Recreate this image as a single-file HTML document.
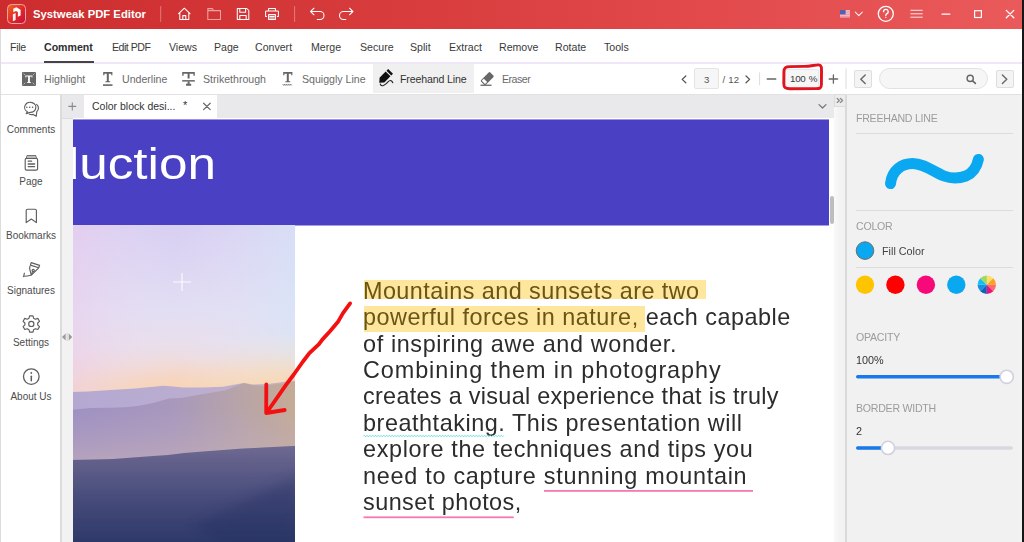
<!DOCTYPE html>
<html><head><meta charset="utf-8">
<style>
*{margin:0;padding:0;box-sizing:border-box}
html,body{width:1024px;height:542px;overflow:hidden;background:#fff;font-family:"Liberation Sans",sans-serif}
.a{position:absolute}
svg{position:absolute;overflow:visible}
#title{left:0;top:0;width:1022px;height:29px;background:linear-gradient(90deg,#cc2c2d 0%,#d83c3d 40%,#e24a4c 70%,#ea5a5b 100%)}
#rborder{left:1022px;top:0;width:2px;height:542px;background:#161616}
#lborder{left:0;top:29px;width:1px;height:513px;background:#dcdcdc}
.ttl{color:#fff;font-weight:bold;font-size:11.3px;left:33px;top:7.5px;white-space:nowrap}
#menu{left:1px;top:29px;width:1021px;height:35px;background:#fff;border-bottom:2px solid #efe7f7}
.mi{position:absolute;top:41px;font-size:10.6px;color:#3a3a3a;white-space:nowrap}
#tool{left:1px;top:64px;width:1021px;height:31px;background:#fff;border-bottom:1px solid #e2e2e2}
.ti{position:absolute;top:73px;font-size:10.6px;color:#6a6a6a;white-space:nowrap}
#sidebar{left:1px;top:95px;width:60px;height:447px;background:#fff;border-right:1px solid #dedede}
.si{position:absolute;font-size:10px;color:#4c4c4c;white-space:nowrap;text-align:center;width:60px;left:1px}
#split{left:61px;top:95px;width:12px;height:447px;background:#f2f2f2}
#tabbar{left:61px;top:95px;width:773px;height:23px;background:#e9e9eb}
#doc{left:73px;top:119px;width:761px;height:423px;background:#fff;overflow:hidden}
#rcol{left:834px;top:95px;width:11px;height:447px;background:linear-gradient(90deg,#f9f9f9,#f3f3f3 50%,#f2f2f2)}
#rline{left:845px;top:95px;width:2px;height:447px;background:#dadada}
#panel{left:847px;top:95px;width:175px;height:447px;background:#f1f1f1}
.pl{position:absolute;left:856px;font-size:10.6px;color:#9c9c9c;white-space:nowrap;letter-spacing:-0.25px}
.pv{position:absolute;left:856px;font-size:10.8px;color:#333;white-space:nowrap}
.para{position:absolute;left:363px;font-size:23.4px;letter-spacing:0.35px;color:#2c2c2c;will-change:transform;white-space:nowrap;line-height:26.4px}
</style></head><body>
<div id="title" class="a"></div>
<div id="rborder" class="a"></div>
<div id="menu" class="a"></div>
<div id="tool" class="a"></div>
<div id="lborder" class="a"></div>
<div id="sidebar" class="a"></div>
<div id="split" class="a"></div>
<div id="tabbar" class="a"></div>
<div id="rcol" class="a"></div>
<div id="rline" class="a"></div>
<div id="panel" class="a"></div>


<!-- logo -->
<svg style="left:0;top:0" width="1024" height="30">
<defs><linearGradient id="lg" x1="0" y1="0" x2="1" y2="1"><stop offset="0" stop-color="#f26a1a"/><stop offset="0.5" stop-color="#e22a28"/><stop offset="1" stop-color="#c80c3c"/></linearGradient></defs>
<rect x="7.5" y="4.5" width="18" height="19" rx="4" fill="url(#lg)" stroke="#f3a3a3" stroke-width="1"/>
<path d="M13.2 8.8 L16.4 7.3 L20.6 9.7 V15.4 L17.9 16.8 V12 L16 11 L13.4 12.2 Z" fill="#fff"/>
<path d="M12.8 14.3 L15.6 13 V19.9 L12.9 21.2 Z" fill="#fff" opacity="0.95"/>
<g stroke="#fff" fill="none" stroke-width="1.05" stroke-linejoin="round" stroke-linecap="round">
<line x1="160.7" y1="6.5" x2="160.7" y2="21.5" stroke="rgba(255,255,255,0.35)" stroke-width="1"/>
<line x1="294.6" y1="6.5" x2="294.6" y2="21.5" stroke="rgba(255,255,255,0.35)" stroke-width="1"/>
<!-- home -->
<path d="M178.6 13.6 L184.3 8.2 L190 13.6 M179.8 12.5 V19.4 H188.8 V12.5 M182.8 19.4 V15.6 H185.8 V19.4"/>
<!-- folder -->
<path d="M207.8 8.6 H212.4 L213.6 10.6 H220.5 V19.4 H207.8 Z M207.8 10.6 H213.6" opacity="0.55"/>
<!-- save -->
<path d="M237.3 8.5 H246.8 L248.8 10.5 V19.4 H237.3 Z M239.8 8.5 V12.2 H245.6 V8.5 M239.8 19.4 V15.4 H246.2 V19.4"/>
<!-- print -->
<path d="M268.6 11 V8.5 H275.4 V11 M266.6 16.4 H265.6 V11.6 Q265.6 11 266.4 11 H277.6 Q278.4 11 278.4 11.6 V16.4 H277.4 M268.6 14.6 H275.4 V19.4 H268.6 Z M269.8 16.5 H274.2 M269.8 18 H274.2" />
<!-- undo -->
<path d="M314 8.2 L310.6 11.5 L314 14.8 M310.8 11.5 H320 A4 4 0 0 1 320 19.5 H317.3"/>
<!-- redo -->
<path d="M349.5 8.2 L352.9 11.5 L349.5 14.8 M352.7 11.5 H343.5 A4 4 0 0 0 343.5 19.5 H345.8"/>
<!-- chevron -->
<path d="M855.2 12 L858.8 15.6 L862.4 12"/>
<!-- help -->
<circle cx="885.8" cy="13.8" r="7.5" stroke-width="1.3"/>
<path d="M883.5 11.7 A2.35 2.35 0 1 1 886.5 13.9 Q885.8 14.4 885.8 15.5" stroke-width="1.3"/>
<circle cx="885.8" cy="17.4" r="0.6" fill="#fff" stroke="none"/>
<!-- hamburger -->
<path d="M910.8 10.3 H922.3 M910.8 13.8 H922.3 M910.8 17.2 H922.3" stroke-width="1" opacity="0.85"/>
<!-- min -->
<path d="M942 14.1 H949.8" stroke-width="1.4"/>
<!-- max -->
<rect x="974.6" y="10.7" width="6.8" height="6.8" stroke-width="1.2" stroke-linejoin="miter"/>
<!-- close -->
<path d="M1006.3 10.4 L1013.8 17.8 M1013.8 10.4 L1006.3 17.8" stroke-width="1.3"/>
</g>
<!-- flag -->
<rect x="840" y="10" width="10" height="7.6" fill="#f3b6c0"/>
<rect x="840" y="11.5" width="10" height="1" fill="#ec8a9a" opacity="0.6"/>
<rect x="840" y="14" width="10" height="1" fill="#ec8a9a" opacity="0.6"/>
<rect x="840" y="16.5" width="10" height="1.1" fill="#e58090"/>
<rect x="840" y="10" width="5.6" height="4.4" fill="#5161b4"/>
</svg>

<!-- title text -->
<div class="a ttl">Systweak PDF Editor</div>

<!-- menu -->
<div class="mi" style="left:10px;letter-spacing:-0.3px">File</div>
<div class="mi" style="left:44px;font-weight:bold;color:#2e2e2e">Comment</div>
<div class="a" style="left:44px;top:61px;width:50px;height:2px;background:#444"></div>
<div class="mi" style="left:112px;letter-spacing:-0.5px">Edit PDF</div>
<div class="mi" style="left:169px">Views</div>
<div class="mi" style="left:214px">Page</div>
<div class="mi" style="left:255px">Convert</div>
<div class="mi" style="left:311px">Merge</div>
<div class="mi" style="left:360px">Secure</div>
<div class="mi" style="left:410px">Split</div>
<div class="mi" style="left:449px">Extract</div>
<div class="mi" style="left:499px">Remove</div>
<div class="mi" style="left:555px">Rotate</div>
<div class="mi" style="left:604px">Tools</div>

<!-- toolbar -->
<div class="a" style="left:373px;top:64px;width:101px;height:29px;background:#f0f0f0"></div>
<div class="ti" style="left:44px">Highlight</div>
<div class="ti" style="left:122px">Underline</div>
<div class="ti" style="left:203px">Strikethrough</div>
<div class="ti" style="left:302px">Squiggly Line</div>
<div class="ti" style="left:400px;color:#333;letter-spacing:-0.15px">Freehand Line</div>
<div class="ti" style="left:502px;letter-spacing:-0.5px">Eraser</div>


<svg style="left:0;top:0" width="1024" height="96">
<!-- highlight -->
<rect x="22" y="72" width="14" height="14" rx="1" fill="#686868"/>
<path d="M25.4 75.4 H32.4 V77.4 H31.6 V76.6 H29.9 V82 H30.8 V83 H27.2 V82 H28.1 V76.6 H26.2 V77.4 H25.4 Z" fill="#fff"/>
<g stroke="#c8c8c8" stroke-width="0.8" stroke-linecap="round"><path d="M23.8 73.8 L25 75 M34.2 73.8 L33 75 M23.8 84.2 L25 83 M34.2 84.2 L33 83"/></g>
<g fill="#666">
<!-- underline -->
<path d="M103.2 72 H112.4 V75.2 H111.2 V73.8 H108.8 V81.2 H110.2 V82.2 H105.4 V81.2 H106.8 V73.8 H104.4 V75.2 H103.2 Z"/>
<rect x="103" y="84.3" width="9.5" height="1.6"/>
<!-- strike -->
<path d="M182.2 72 H194.8 V75.8 H193.4 V73.8 H189.6 V78.6 H187.6 V73.8 H183.6 V75.8 H182.2 Z"/>
<rect x="182.2" y="80.1" width="12.6" height="1.5"/>
<path d="M187.6 81.6 H189.6 V83.8 H191.2 V85.7 H186 V83.8 H187.6 Z"/>
<!-- squiggly -->
<path d="M283.2 72 H292.4 V75.2 H291.2 V73.8 H288.8 V81.2 H290.2 V82.2 H285.4 V81.2 H286.8 V73.8 H284.4 V75.2 H283.2 Z"/>
</g>
<path d="M282.8 84.2 l1 1.2 l1 -1.2 l1 1.2 l1 -1.2 l1 1.2 l1 -1.2 l1 1.2 l1 -1.2 l1 1.2" stroke="#666" stroke-width="0.9" fill="none"/>
<!-- freehand pen -->
<g transform="translate(384.5 77.5) rotate(45)">
<path d="M-3.4 -5 H3.4 V3.6 L0 7.4 L-3.4 3.6 Z" fill="#111"/>
<rect x="-3.4" y="-8.6" width="6.8" height="2.4" fill="#111"/>
</g>
<path d="M380.3 84 Q381 86.4 383.5 85.4 Q386.2 84 388 81.8 Q390 79.6 391.6 81 Q392.4 81.8 392.8 82.8" stroke="#222" stroke-width="1.1" fill="none" stroke-linecap="round"/>
<!-- eraser -->
<g transform="translate(487.6 78.2) rotate(-45)">
<rect x="-7" y="-3.3" width="13" height="6.6" rx="1.2" fill="#686868"/>
<rect x="-6" y="-2.3" width="3" height="4.6" fill="#fff"/>
</g>
<rect x="480.5" y="84.6" width="11" height="1.3" fill="#686868"/>
</svg>


<!-- nav controls -->
<div class="a" style="left:694px;top:68px;width:25px;height:21px;background:#f6f6f6;border:1px solid #e4e4e4;border-radius:2px"></div>
<div class="a" style="left:704px;top:73.7px;font-size:9.6px;color:#555">3</div>
<div class="a" style="left:722.5px;top:74px;font-size:9.6px;color:#555;white-space:nowrap;word-spacing:0.5px">/ 12</div>
<div class="a" style="left:785px;top:68.5px;width:34px;height:20px;background:#f6f6f6;border:1px solid #e8e8e8;border-radius:2px"></div>
<div class="a" style="left:790px;top:72.6px;font-size:9.8px;color:#3a3a3a;white-space:nowrap;letter-spacing:-0.3px;word-spacing:1px">100 %</div>
<div class="a" style="left:853.5px;top:70px;width:18.5px;height:18px;background:#f4f4f4;border:1px solid #dedede;border-radius:2px"></div>
<div class="a" style="left:995.5px;top:70px;width:18.5px;height:18px;background:#f4f4f4;border:1px solid #dedede;border-radius:2px"></div>
<div class="a" style="left:879px;top:68px;width:109px;height:21px;background:#f6f6f6;border:1px solid #e2e2e2;border-radius:11px"></div>
<svg style="left:0;top:0" width="1024" height="96">
<g stroke="#555" fill="none" stroke-width="1.3" stroke-linecap="round" stroke-linejoin="round">
<path d="M685.8 76 L682.2 79.4 L685.8 82.8"/>
<path d="M746 76 L749.6 79.4 L746 82.8"/>
<path d="M767.2 79 H775.8" stroke="#666"/>
<path d="M829.2 79 H837.6 M833.4 74.8 V83.2" stroke="#666"/>
<path d="M865.2 75 L860.8 79.2 L865.2 83.4" stroke="#666" stroke-width="1.4"/>
<path d="M1002.4 75 L1006.8 79.2 L1002.4 83.4" stroke="#666" stroke-width="1.4"/>
<circle cx="970.2" cy="78.4" r="3.1" stroke="#666" stroke-width="1.4"/>
<path d="M972.6 80.8 L975.4 83.4" stroke="#666" stroke-width="1.6"/>
</g>
<line x1="759.6" y1="72.4" x2="759.6" y2="85.2" stroke="#dcdcdc" stroke-width="1"/>
<line x1="846" y1="68.5" x2="846" y2="89" stroke="#dcdcdc" stroke-width="1"/>
<path d="M783.9 72 C783.9 67.4 786 66.7 790 66.6 L804 66.4 C811 66.2 815 64.8 818.6 64.9 C821.8 65.1 821.6 68 821.5 72 L821.4 84.6 C821.4 88.2 820 88.6 816 88.6 L790 88.7 C785.4 88.7 783.8 87.8 783.8 83.4 Z" stroke="#e0141e" stroke-width="2.9" fill="none" stroke-linejoin="round"/>
</svg>


<!-- sidebar -->
<svg style="left:0;top:0" width="100" height="542">
<g stroke="#5e5e5e" fill="none" stroke-width="1.15" stroke-linecap="round" stroke-linejoin="round">
<!-- comments -->
<path d="M35.6 108.8 A5.6 5.1 0 1 0 27.4 111.8 L26.2 113.6 L30.2 112.4 A5.6 5.1 0 0 0 35.6 108.8"/>
<path d="M36.6 104.4 A5.2 4.8 0 0 1 36.8 111.6 L36.2 116.3 L33.2 114.4 A5.4 4.8 0 0 1 29.4 114.2"/>
<!-- page -->
<rect x="25.2" y="158.3" width="12.4" height="11.8" rx="1.4"/>
<path d="M26.4 158.3 L27.2 155.6 H35.6 L36.4 158.3"/>
<path d="M28.2 161.2 H31.6 M28.2 164 H34.6 M28.2 166.6 H34.6" stroke-width="1.3"/>
<!-- bookmark -->
<path d="M26.2 222.6 V210.6 Q26.2 209.2 27.6 209.2 H35 Q36.4 209.2 36.4 210.6 V222.6 L31.3 219 Z"/>
<!-- signature -->
<path d="M31.2 262.6 L39.6 265.4 L38.7 267.8 L30.4 265.1 Z"/>
<path d="M30 266.2 L29.6 268.6 L31.3 275 L38.3 268.4"/>
<circle cx="33.2" cy="270.4" r="1.1"/>
<path d="M32.6 271.4 L31.6 274.4"/>
<path d="M31.3 275 Q27.5 276.2 23.8 276.2 M24.4 273.2 L23.6 276.6"/>
<!-- gear -->
<path d="M29.6 315.8 H33 L33.6 318.2 L35.4 319.2 L37.8 318.4 L39.5 321.3 L37.7 323 V324.9 L39.5 326.6 L37.8 329.5 L35.4 328.7 L33.6 329.7 L33 332.1 H29.6 L29 329.7 L27.2 328.7 L24.8 329.5 L23.1 326.6 L24.9 324.9 V323 L23.1 321.3 L24.8 318.4 L27.2 319.2 L29 318.2 Z"/>
<circle cx="31.3" cy="323.9" r="2.6"/>
<!-- info -->
<circle cx="31.3" cy="376.6" r="7.8" stroke-width="1.3"/>
<path d="M31.3 376.2 V380.8" stroke-width="1.5"/>
</g>
<g fill="#5e5e5e">
<circle cx="26.8" cy="107.2" r="0.8"/><circle cx="29.7" cy="107.2" r="0.8"/><circle cx="32.6" cy="107.2" r="0.8"/>
<path d="M27.4 155.8 H35.4 L36 158 H26.8 Z" fill="#bbb"/>
<circle cx="31.3" cy="373" r="0.9"/>
</g>
</svg>
<div class="si" style="top:124px">Comments</div>
<div class="si" style="top:176px">Page</div>
<div class="si" style="top:230px">Bookmarks</div>
<div class="si" style="top:285px">Signatures</div>
<div class="si" style="top:337px">Settings</div>
<div class="si" style="top:391px">About Us</div>


<!-- tabbar content -->
<div class="a" style="left:84px;top:95px;width:133px;height:24px;background:#fff"></div>
<div class="a" style="left:92px;top:100px;font-size:10.5px;color:#333;white-space:nowrap">Color block desi...</div>
<div class="a" style="left:183px;top:99px;font-size:11px;color:#333">*</div>
<div class="a" style="left:61px;top:118px;width:12px;height:1px;background:#dcdcdc"></div>
<div class="a" style="left:834px;top:94px;width:12px;height:13px;background:#ececec;border:1px solid #dcdcdc"></div>
<svg style="left:0;top:0" width="1024" height="542">
<g stroke="#777" stroke-width="1.1" fill="none" stroke-linecap="round" stroke-linejoin="round">
<path d="M68.8 106.4 H75.8 M72.3 102.9 V109.9" stroke="#8a8a8a"/>
<path d="M203.6 103.2 L210.2 109.6 M210.2 103.2 L203.6 109.6" stroke="#666" stroke-width="1.2"/>
<path d="M819 104.6 L822.5 108 L826 104.6" stroke="#777" stroke-width="1.3"/>
<path d="M837.2 98.4 L839.4 100.4 L837.2 102.4 M840.4 98.4 L842.6 100.4 L840.4 102.4" stroke="#8a8a8a" stroke-width="1.3"/>
</g>
<path d="M62 337 L65.6 333.6 V340.4 Z M72.2 337 L68.8 333.6 V340.4 Z" fill="#999"/>
<rect x="66.4" y="333" width="1.8" height="8" fill="#dcdcdc"/>
<rect x="60" y="95" width="2" height="447" fill="#dcdcdc"/>
</svg>

<!-- doc -->
<div id="doc" class="a">
<div class="a" style="left:0;top:0;width:756px;height:1px;background:rgba(74,64,195,0.55)"></div><div class="a" style="left:0;top:1px;width:756px;height:105px;background:#4a40c3"></div><div class="a" style="left:0;top:106px;width:756px;height:1px;background:rgba(74,64,195,0.5)"></div>
<div class="a" id="intro" style="left:-124.7px;top:15px;font-size:45px;color:#fff;white-space:nowrap;line-height:60px;transform-origin:0 0;transform:scaleX(1.14)">Introduction</div>
</div>
<div class="a" style="left:830px;top:196px;width:4px;height:28px;background:#bdbdbd;border-radius:2px"></div>
<svg style="left:73px;top:225px;overflow:hidden" width="222" height="317">
<defs>
<linearGradient id="sky" gradientUnits="userSpaceOnUse" x1="0" y1="0" x2="0" y2="170">
<stop offset="0" stop-color="#d8cff2"/>
<stop offset="0.25" stop-color="#ddd6f3"/>
<stop offset="0.5" stop-color="#e2def3"/>
<stop offset="0.7" stop-color="#e9dfeb"/>
<stop offset="0.85" stop-color="#f2dad6"/>
<stop offset="1" stop-color="#f6d4bc"/>
</linearGradient>
<linearGradient id="skyh" x1="0" y1="0" x2="1" y2="0">
<stop offset="0" stop-color="#eccdec" stop-opacity="0.55"/>
<stop offset="0.45" stop-color="#e8e0f4" stop-opacity="0"/>
<stop offset="1" stop-color="#d6e6f8" stop-opacity="0.65"/>
</linearGradient>
<radialGradient id="skyo" gradientUnits="userSpaceOnUse" cx="170" cy="168" r="120" gradientTransform="translate(170 166) scale(1.8 0.3) translate(-170 -166)">
<stop offset="0" stop-color="#fbd0a0" stop-opacity="0.85"/>
<stop offset="0.55" stop-color="#f8d4b8" stop-opacity="0.5"/>
<stop offset="1" stop-color="#f4d8d0" stop-opacity="0"/>
</radialGradient>
<radialGradient id="skyo2" gradientUnits="userSpaceOnUse" cx="222" cy="166" r="100" gradientTransform="translate(222 166) scale(1.2 0.6) translate(-222 -166)">
<stop offset="0" stop-color="#fcd8a8" stop-opacity="0.7"/>
<stop offset="0.5" stop-color="#f6e0c4" stop-opacity="0.45"/>
<stop offset="1" stop-color="#f0e4dc" stop-opacity="0"/>
</radialGradient>
<linearGradient id="r1" x1="0" y1="0" x2="1" y2="0">
<stop offset="0" stop-color="#b4a8d2"/>
<stop offset="0.6" stop-color="#bcaed0"/>
<stop offset="1" stop-color="#c6b2c0"/>
</linearGradient>
<linearGradient id="r2" x1="0" y1="0" x2="1" y2="0">
<stop offset="0" stop-color="#9e90c2"/>
<stop offset="0.45" stop-color="#a898bc"/>
<stop offset="0.75" stop-color="#b8a4a8"/>
<stop offset="1" stop-color="#c6ac94"/>
</linearGradient>
<linearGradient id="r2v" x1="0" y1="0" x2="0" y2="1">
<stop offset="0" stop-color="#b8a8c8" stop-opacity="0"/>
<stop offset="0.3" stop-color="#b8a8c8" stop-opacity="0"/>
<stop offset="1" stop-color="#c8b0b4" stop-opacity="0.7"/>
</linearGradient>
<linearGradient id="r3" x1="0" y1="0" x2="0" y2="1">
<stop offset="0" stop-color="#6e6a92"/>
<stop offset="0.22" stop-color="#5e5c88"/>
<stop offset="0.55" stop-color="#464b7a"/>
<stop offset="1" stop-color="#2c3868"/>
</linearGradient>
<filter id="bl" x="-10%" y="-10%" width="120%" height="120%"><feGaussianBlur stdDeviation="0.7"/></filter>
<filter id="bl2" x="-50%" y="-50%" width="200%" height="200%"><feGaussianBlur stdDeviation="6"/></filter>
</defs>
<rect width="222" height="317" fill="url(#sky)"/>
<rect width="222" height="175" fill="url(#skyh)"/>
<rect y="0" width="222" height="200" fill="url(#skyo)"/><rect y="0" width="222" height="200" fill="url(#skyo2)"/>
<g filter="url(#bl)">
<path d="M-4 167 L15 166.5 L30 165.5 L46 164.4 L62 163.5 L78 162 L90.4 160.7 L100 161.5 L110 162.5 L130 162.5 L150 161.8 L162 159.5 L171 158 L180 159.5 L195 159 L210 157 L226 155 V210 H-4 Z" fill="url(#r1)"/>
<path d="M-4 185 L18 183 L37 182.8 L52 182.3 L64.6 181 L80 178 L96 173.6 L110 172.7 L130 169 L152 165.6 L163 161 L171 158 L178 160 L190 161 L205 159 L226 156 V245 H-4 Z" fill="url(#r2)"/>
<path d="M-4 185 L18 183 L37 182.8 L52 182.3 L64.6 181 L80 178 L96 173.6 L110 172.7 L130 169 L152 165.6 L163 161 L171 158 L178 160 L190 161 L205 159 L226 156 V245 H-4 Z" fill="url(#r2v)" />
<path d="M-4 235 L20 234.5 L40 234 L60 232.6 L80 231 L95 230 L111 228 L130 226.5 L150 225 L170 223.6 L190 222.5 L226 220.6 V320 H-4 Z" fill="url(#r3)"/>
</g>
<path d="M120 300 L226 250 V320 H150 Z" fill="#1c2a5c" opacity="0.3" filter="url(#bl2)"/>
<path d="M109 48 V66 M100 57 H118" stroke="#fff" stroke-opacity="0.9" stroke-width="1.1"/>
</svg>
<!-- highlights -->
<div class="a" style="left:363.5px;top:280px;width:342px;height:19px;background:#fee69c"></div>
<div class="a" style="left:363.5px;top:306px;width:281.5px;height:26px;background:#fee69c"></div>
<!-- paragraph -->
<div class="para" id="l1" style="letter-spacing:0.44px;top:277.7px;color:#6a5518">Mountains and sunsets are two</div>
<div class="para" id="l2" style="letter-spacing:0.5px;top:304.1px"><span style="color:#6a5518">powerful forces in nature, </span>each capable</div>
<div class="para" id="l3" style="letter-spacing:0.63px;top:330.5px">of inspiring awe and wonder.</div>
<div class="para" id="l4" style="letter-spacing:0.93px;top:356.9px">Combining them in photography</div>
<div class="para" id="l5" style="letter-spacing:0.31px;top:383.3px">creates a visual experience that is truly</div>
<div class="para" id="l6" style="letter-spacing:0.55px;top:409.7px">breathtaking. This presentation will</div>
<div class="para" id="l7" style="letter-spacing:0.64px;top:436.1px">explore the techniques and tips you</div>
<div class="para" id="l8" style="letter-spacing:0.73px;top:462.5px">need to capture stunning mountain</div>
<div class="para" id="l9" style="letter-spacing:0.47px;top:488.9px">sunset photos,</div>
<svg style="left:0;top:0" width="1024" height="542">
<path d="M363.5 436 q0.7 -1.2 1.4 0 t1.4 0 q0.7 -1.2 1.4 0 t1.4 0 q0.7 -1.2 1.4 0 t1.4 0 q0.7 -1.2 1.4 0 t1.4 0 q0.7 -1.2 1.4 0 t1.4 0 q0.7 -1.2 1.4 0 t1.4 0 q0.7 -1.2 1.4 0 t1.4 0 q0.7 -1.2 1.4 0 t1.4 0 q0.7 -1.2 1.4 0 t1.4 0 q0.7 -1.2 1.4 0 t1.4 0 q0.7 -1.2 1.4 0 t1.4 0 q0.7 -1.2 1.4 0 t1.4 0 q0.7 -1.2 1.4 0 t1.4 0 q0.7 -1.2 1.4 0 t1.4 0 q0.7 -1.2 1.4 0 t1.4 0 q0.7 -1.2 1.4 0 t1.4 0 q0.7 -1.2 1.4 0 t1.4 0 q0.7 -1.2 1.4 0 t1.4 0 q0.7 -1.2 1.4 0 t1.4 0 q0.7 -1.2 1.4 0 t1.4 0 q0.7 -1.2 1.4 0 t1.4 0 q0.7 -1.2 1.4 0 t1.4 0 q0.7 -1.2 1.4 0 t1.4 0 q0.7 -1.2 1.4 0 t1.4 0 q0.7 -1.2 1.4 0 t1.4 0 q0.7 -1.2 1.4 0 t1.4 0 q0.7 -1.2 1.4 0 t1.4 0 q0.7 -1.2 1.4 0 t1.4 0 q0.7 -1.2 1.4 0 t1.4 0 q0.7 -1.2 1.4 0 t1.4 0 q0.7 -1.2 1.4 0 t1.4 0 q0.7 -1.2 1.4 0 t1.4 0 q0.7 -1.2 1.4 0 t1.4 0 q0.7 -1.2 1.4 0 t1.4 0 q0.7 -1.2 1.4 0 t1.4 0 q0.7 -1.2 1.4 0 t1.4 0 q0.7 -1.2 1.4 0 t1.4 0 q0.7 -1.2 1.4 0 t1.4 0 q0.7 -1.2 1.4 0 t1.4 0 q0.7 -1.2 1.4 0 t1.4 0 q0.7 -1.2 1.4 0 t1.4 0 q0.7 -1.2 1.4 0 t1.4 0 q0.7 -1.2 1.4 0 t1.4 0 q0.7 -1.2 1.4 0 t1.4 0 q0.7 -1.2 1.4 0 t1.4 0 q0.7 -1.2 1.4 0 t1.4 0 q0.7 -1.2 1.4 0 t1.4 0 q0.7 -1.2 1.4 0 t1.4 0 q0.7 -1.2 1.4 0 t1.4 0 q0.7 -1.2 1.4 0 t1.4 0" stroke="#4cd6d8" stroke-width="0.9" fill="none"/>
<rect x="544" y="490" width="209" height="1.8" fill="#f47ab2"/>
<rect x="363.5" y="516.4" width="150.2" height="1.8" fill="#f47ab2"/>
<path d="M350.1 303.4 L343 313.1 L337.8 322.1 L330 331.2 L322.3 339.6 L319 344.1 L309.4 353.1 L303 361.5 L293.8 374.5 L286 384.9 L277 397.8 L266.4 413 M266.3 384.4 L266.2 413 L284.7 410" stroke="#f41010" stroke-width="3.8" fill="none" stroke-linecap="round" stroke-linejoin="round"/>
</svg>


<!-- panel -->
<div class="pl" style="top:112px">FREEHAND LINE</div>
<div class="a" style="left:856px;top:133px;width:157px;height:1px;background:#dcdcdc"></div>
<div class="a" style="left:856px;top:210px;width:157px;height:1px;background:#dcdcdc"></div>
<div class="pl" style="top:220px">COLOR</div>
<div class="pv" style="left:882px;top:245px;color:#444">Fill Color</div>
<div class="a" style="left:856px;top:267px;width:157px;height:1px;background:#dcdcdc"></div>
<div class="pl" style="top:331px">OPACITY</div>
<div class="pv" style="top:354px">100%</div>
<div class="pl" style="top:402px">BORDER WIDTH</div>
<div class="pv" style="top:425px">2</div>


<svg style="left:0;top:0" width="1024" height="542">
<path d="M890.5 183.6 C892 170 902 163.5 912.5 163.5 C924 163.5 934 172 944 176 C952 179 959 178.5 966 176 C973 173 977 166 978.4 159.4" stroke="#0aa8f0" stroke-width="11" fill="none" stroke-linecap="round"/>
<circle cx="865" cy="250.6" r="8.8" fill="#0aa8f0" stroke="#6a6a6a" stroke-width="1"/>
<circle cx="865" cy="284.7" r="9.2" fill="#ffc400"/>
<circle cx="895.4" cy="284.7" r="9.2" fill="#fe0000"/>
<circle cx="925.9" cy="284.7" r="9.2" fill="#f8097a"/>
<circle cx="956.3" cy="284.7" r="9.2" fill="#0aa8f0"/>
<g transform="translate(986.8 284.7)">
<path d="M0 0 L0 -9.2 A9.2 9.2 0 0 1 6.5 -6.5 Z" fill="#ffe066"/>
<path d="M0 0 L6.5 -6.5 A9.2 9.2 0 0 1 9.2 0 Z" fill="#ffa020"/>
<path d="M0 0 L9.2 0 A9.2 9.2 0 0 1 6.5 6.5 Z" fill="#ff6a6a"/>
<path d="M0 0 L6.5 6.5 A9.2 9.2 0 0 1 0 9.2 Z" fill="#f0107a"/>
<path d="M0 0 L0 9.2 A9.2 9.2 0 0 1 -6.5 6.5 Z" fill="#1060c0"/>
<path d="M0 0 L-6.5 6.5 A9.2 9.2 0 0 1 -9.2 0 Z" fill="#1a90e0"/>
<path d="M0 0 L-9.2 0 A9.2 9.2 0 0 1 -6.5 -6.5 Z" fill="#10c0f0"/>
<path d="M0 0 L-6.5 -6.5 A9.2 9.2 0 0 1 0 -9.2 Z" fill="#a0d860"/>
</g>
<rect x="856" y="375" width="151" height="3.6" rx="1.8" fill="#1878ec"/>
<circle cx="1006.7" cy="376.8" r="6.6" fill="#fff" stroke="#d2d0e0" stroke-width="1.6"/>
<rect x="856" y="446.2" width="157" height="3.6" rx="1.8" fill="#d9d7e3"/>
<rect x="856" y="446.2" width="32" height="3.6" rx="1.8" fill="#1878ec"/>
<circle cx="888" cy="447.9" r="6.6" fill="#fff" stroke="#d2d0e0" stroke-width="1.6"/>
</svg>

</body></html>
